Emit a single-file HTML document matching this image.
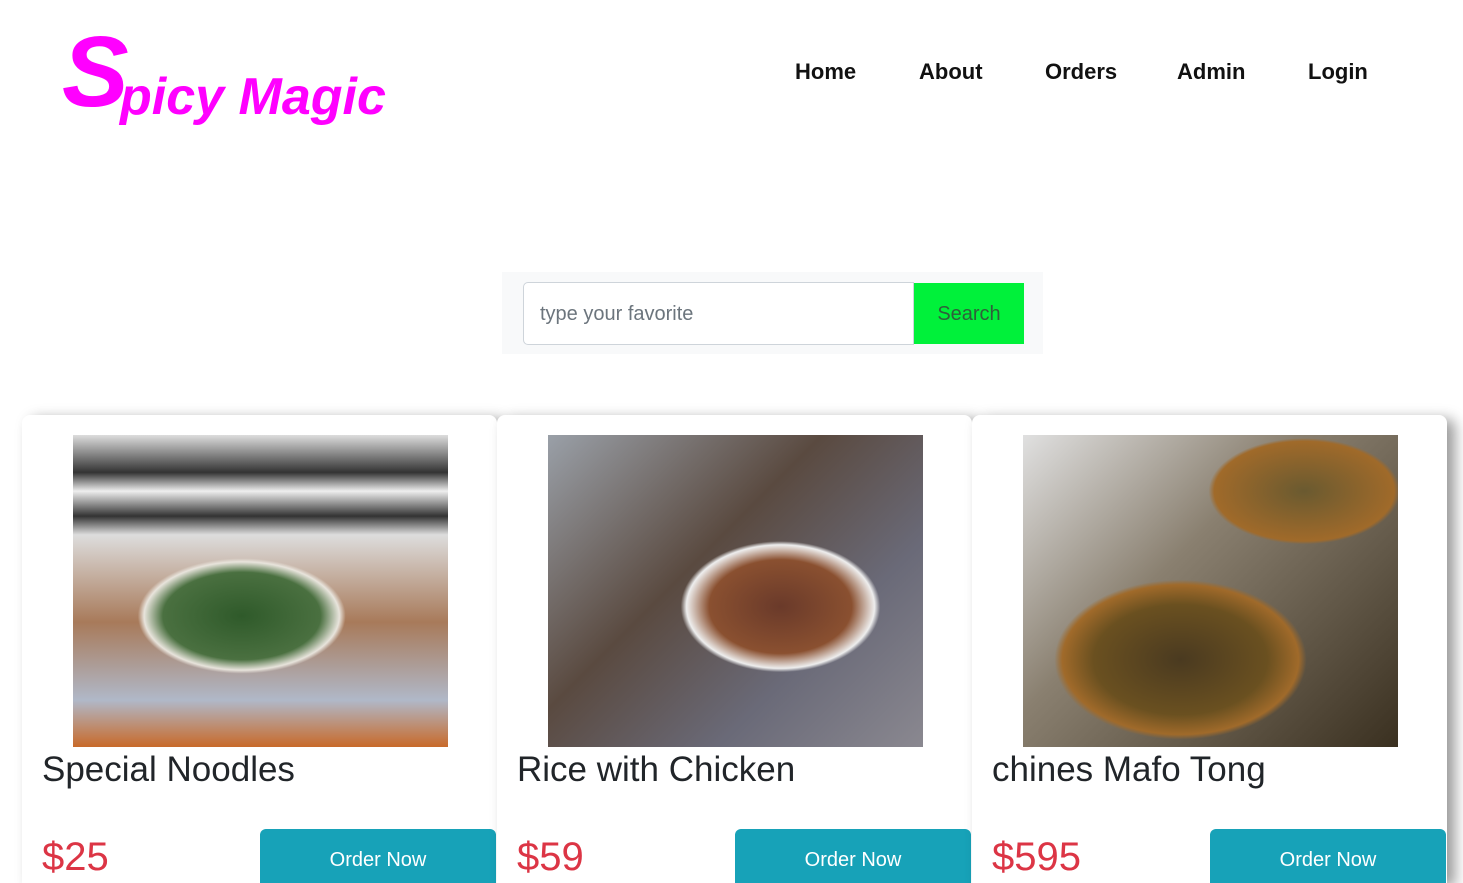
<!DOCTYPE html>
<html><head><meta charset="utf-8"><style>
*{margin:0;padding:0;box-sizing:border-box}
html,body{width:1463px;height:883px;overflow:hidden}
body{background:#fff;font-family:"Liberation Sans",sans-serif;position:relative}
.logo{position:absolute;left:62px;top:22px;color:#f0f;font-weight:bold;font-style:italic;white-space:nowrap}
.logo .s{font-size:100px;position:absolute;left:0;top:0;line-height:100px}
.logo .r{font-size:52px;position:absolute;left:58px;top:40px;line-height:70px}
.nav a{position:absolute;top:59px;font-weight:bold;font-size:22px;color:#111;text-decoration:none}
.sbox{position:absolute;left:502px;top:272px;width:541px;height:82px;background:#f8f9fa}
.inp{position:absolute;left:523px;top:282px;width:391px;height:63px;border:1px solid #ced4da;border-radius:5px 0 0 5px;background:#fff;color:#6c757d;font-size:20px;padding:20px 16px}
.btn{position:absolute;left:914px;top:283px;width:110px;height:61px;background:#00f13a;color:#2f5f3a;font-size:20px;text-align:center;line-height:63px}
.card{position:absolute;top:415px;width:475px;height:468px;background:#fff;border-radius:8px 8px 0 0;box-shadow:8px 4px 14px rgba(0,0,0,.4)}
.img{position:absolute;left:51px;top:20px;width:375px;height:312px}
.t{position:absolute;left:20px;top:335px;font-size:35px;color:#212529;white-space:nowrap}
.p{position:absolute;left:20px;top:420px;font-size:40px;color:#dc3545}
.o{position:absolute;left:238px;top:414px;width:236px;height:70px;background:#17a2b8;border-radius:6px;color:#fff;font-size:20px;text-align:center;line-height:62px}
</style></head><body>
<div class="logo"><span class="s">S</span><span class="r">picy Magic</span></div>
<div class="nav"><a style="left:795px">Home</a><a style="left:919px">About</a><a style="left:1045px">Orders</a><a style="left:1177px">Admin</a><a style="left:1308px">Login</a></div>
<div class="sbox"></div>
<div class="inp">type your favorite</div>
<div class="btn">Search</div>
<div class="card" style="left:22px"><div class="img" style="background:radial-gradient(ellipse 42% 28% at 45% 58%,#2f5a2a 0,#4a7040 50%,#e8e4dc 62%,transparent 66%),linear-gradient(#ddd 0,#333 12%,#eee 18%,#333 26%,#ddd 32%,#a87a5a 60%,#b0b8c8 85%,#c86a2a 100%)"></div><div class="t">Special Noodles</div><div class="p">$25</div><div class="o">Order Now</div></div>
<div class="card" style="left:497px"><div class="img" style="background:radial-gradient(ellipse 38% 30% at 62% 55%,#6a3a2a 0,#8a5030 50%,#eee 66%,transparent 70%),linear-gradient(135deg,#9aa0a8,#5a4a40 40%,#6a6a78 70%,#8a8890)"></div><div class="t">Rice with Chicken</div><div class="p">$59</div><div class="o">Order Now</div></div>
<div class="card" style="left:972px"><div class="img" style="background:radial-gradient(ellipse 42% 32% at 42% 72%,#4a3a20 0,#6a5020 55%,#a06a2a 75%,transparent 80%),radial-gradient(ellipse 30% 20% at 75% 18%,#6a5a30,#a06a2a 80%,transparent 85%),linear-gradient(135deg,#e0e0e0,#8a8070 40%,#3a3020)"></div><div class="t">chines Mafo Tong</div><div class="p">$595</div><div class="o">Order Now</div></div>
</body></html>
